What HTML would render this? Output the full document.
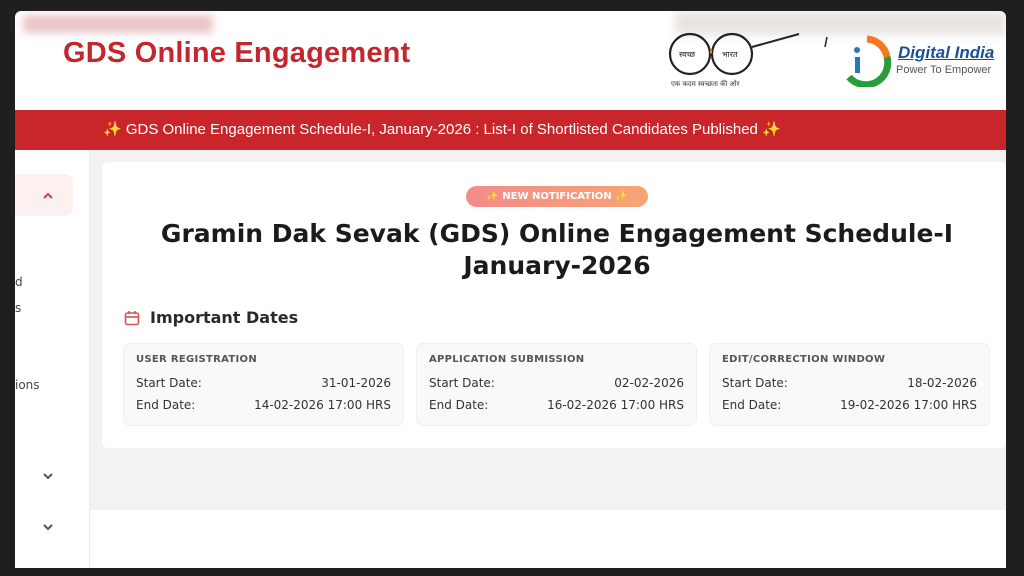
<!DOCTYPE html>
<html><head><meta charset="utf-8"><style>
*{margin:0;padding:0;box-sizing:border-box}
body{width:1024px;height:576px;background:#1f1f1f;position:relative;overflow:hidden;font-family:"DejaVu Sans","Liberation Sans",sans-serif}
.page{position:absolute;left:15px;top:11px;width:991px;height:557px;background:#fff;border-radius:6px 6px 0 0;overflow:hidden}
.blur{position:absolute;left:8px;top:4px;width:190px;height:18px;background:#e6b8bb;filter:blur(4px);opacity:.8}
.blur2{position:absolute;left:660px;top:0;width:331px;height:24px;background:#e8e4e0;filter:blur(5px)}
.h1{position:absolute;left:48px;top:26px;font-size:29px;font-weight:bold;color:#c4262e;font-family:"Liberation Sans",sans-serif;letter-spacing:.2px}
.band{position:absolute;left:0;top:99px;width:991px;height:40px;background:#c9262c;color:#fff;font-size:15px;line-height:40px;padding-left:88px;font-family:"Liberation Sans",sans-serif;white-space:nowrap}
.side{position:absolute;left:0;top:139px;width:75px;height:418px;background:#fff;border-right:1px solid #ececec}
.main{position:absolute;left:75px;top:139px;width:916px;height:418px;background:#fff}
.gray{position:absolute;left:0;top:0;width:916px;height:360px;background:#f4f2f1}
.card{position:absolute;left:12px;top:12px;width:904px;height:286px;background:#fff;border-radius:6px}
.badge{position:absolute;left:364px;top:24px;width:182px;height:21px;border-radius:11px;background:linear-gradient(90deg,#f38b8b,#f6a574);color:#fff;font-size:10px;font-weight:bold;text-align:center;line-height:21px}
.title{position:absolute;left:0;top:56px;width:910px;text-align:center;font-size:25px;font-weight:bold;color:#1b1b1b;line-height:32px}
.imp{position:absolute;left:22px;top:146px;font-size:16px;font-weight:bold;color:#2a2a2a}
.box{position:absolute;top:181px;width:281px;height:83px;background:#f7f9fb;border:1px solid #eef0f3;border-radius:7px;padding:10px 12px;font-size:12px;color:#333}
.box .t{font-size:10px;font-weight:bold;color:#555;margin-bottom:7px;letter-spacing:.3px}
.row{display:flex;justify-content:space-between;line-height:22px}
.chev{position:absolute}
</style></head><body>
<div class="page">
<div class="blur"></div><div class="blur2"></div>
<div class="h1">GDS Online Engagement</div>
<svg style="position:absolute;left:652px;top:20px" width="170" height="62">
<circle cx="23" cy="23" r="20" fill="none" stroke="#222" stroke-width="2.2"/>
<circle cx="65" cy="23" r="20" fill="none" stroke="#222" stroke-width="2.2"/>
<line x1="43" y1="21" x2="45" y2="21" stroke="#f80" stroke-width="3"/>
<line x1="85" y1="16" x2="132" y2="3" stroke="#222" stroke-width="2"/>
<text x="12" y="26" font-size="8" fill="#222">स्वच्छ</text><text x="55" y="26" font-size="8" fill="#222">भारत</text>
<text x="4" y="55" font-size="7" fill="#333">एक कदम स्वच्छता की ओर</text>
<line x1="160" y1="6" x2="158" y2="16" stroke="#222" stroke-width="1.5"/>
</svg>
<svg style="position:absolute;left:822px;top:24px" width="60" height="52">
<path d="M30 4 A22 22 0 0 1 50 22" fill="none" stroke="#f47a20" stroke-width="7"/>
<path d="M50 22 A22 22 0 0 1 12 42" fill="none" stroke="#2a9d3a" stroke-width="7"/>
<rect x="18" y="22" width="5" height="16" fill="#2477c0"/><circle cx="20" cy="15" r="3" fill="#2477c0"/>
</svg>
<div style="position:absolute;left:883px;top:32px;font-size:17px;font-weight:bold;font-style:italic;color:#1b4f9c;font-family:'Liberation Sans',sans-serif;text-decoration:underline">Digital India</div>
<div style="position:absolute;left:881px;top:53px;font-size:11px;color:#555;font-family:'Liberation Sans',sans-serif;white-space:nowrap">Power To Empower</div>
<div class="band">✨ GDS Online Engagement Schedule-I, January-2026 : List-I of Shortlisted Candidates Published ✨</div>
<div class="side">
<div style="position:absolute;left:0;top:24px;width:58px;height:42px;background:#fcf0f0;border-radius:0 8px 8px 0"></div>
<svg class="chev" style="left:28px;top:42px" width="10" height="7"><path d="M1 6 L5 2 L9 6" fill="none" stroke="#c44" stroke-width="2"/></svg>
<div style="position:absolute;left:0;top:125px;font-size:12px;color:#444">d</div>
<div style="position:absolute;left:0;top:151px;font-size:12px;color:#444">s</div>
<div style="position:absolute;left:0;top:228px;font-size:12px;color:#444">ions</div>
<svg class="chev" style="left:28px;top:323px" width="10" height="7"><path d="M1 1 L5 5 L9 1" fill="none" stroke="#555" stroke-width="2"/></svg>
<svg class="chev" style="left:28px;top:374px" width="10" height="7"><path d="M1 1 L5 5 L9 1" fill="none" stroke="#555" stroke-width="2"/></svg>
</div>
<div class="main"><div class="gray"></div>
<div class="card">
<div class="badge">✨ NEW NOTIFICATION ✨</div>
<div class="title">Gramin Dak Sevak (GDS) Online Engagement Schedule-I<br>January-2026</div>
<svg style="position:absolute;left:22px;top:148px" width="16" height="16"><rect x="1.5" y="3" width="13" height="11.5" rx="2" fill="none" stroke="#d9534f" stroke-width="1.6"/><line x1="1.5" y1="7" x2="14.5" y2="7" stroke="#d9534f" stroke-width="1.6"/><line x1="5" y1="1" x2="5" y2="4" stroke="#d9534f" stroke-width="1.6"/><line x1="11" y1="1" x2="11" y2="4" stroke="#d9534f" stroke-width="1.6"/></svg>
<div class="imp" style="left:48px">Important Dates</div>
<div class="box" style="left:21px"><div class="t">USER REGISTRATION</div><div class="row"><span>Start Date:</span><span>31-01-2026</span></div><div class="row"><span>End Date:</span><span>14-02-2026 17:00 HRS</span></div></div>
<div class="box" style="left:314px"><div class="t">APPLICATION SUBMISSION</div><div class="row"><span>Start Date:</span><span>02-02-2026</span></div><div class="row"><span>End Date:</span><span>16-02-2026 17:00 HRS</span></div></div>
<div class="box" style="left:607px"><div class="t">EDIT/CORRECTION WINDOW</div><div class="row"><span>Start Date:</span><span>18-02-2026</span></div><div class="row"><span>End Date:</span><span>19-02-2026 17:00 HRS</span></div></div>
</div></div>
</div>
</body></html>
